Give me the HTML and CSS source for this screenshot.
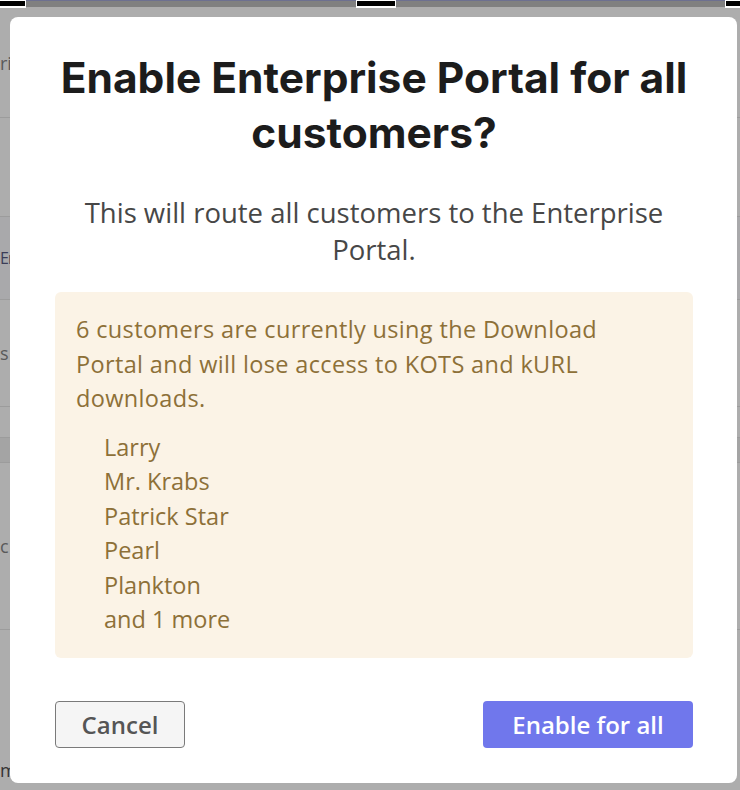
FILE: index.html
```html
<!DOCTYPE html>
<html lang="en">
<head>
<meta charset="utf-8">
<title>Enable Enterprise Portal</title>
<link rel="stylesheet" href="styles.css">
</head>
<body>
<div class="page">
  <div class="topbar">
    <div class="tb-box tb-box-first"><span class="tb-black"></span></div>
    <div class="tb-bar"></div>
    <div class="tb-box tb-box-mid"><span class="tb-black"></span></div>
    <div class="tb-bar"></div>
    <div class="tb-box tb-box-last"><span class="tb-black"></span></div>
  </div>
  <div class="rows">
    <div class="row row-1"><span class="frag">ri</span></div>
    <div class="row row-2"></div>
    <div class="row row-3"><span class="frag frag-link">Er</span></div>
    <div class="row row-4"><span class="frag">s</span></div>
    <div class="row row-5"></div>
    <div class="row row-6"></div>
    <div class="row row-7"><span class="frag">c</span></div>
    <div class="row row-8"><span class="frag frag-dark">m</span></div>
  </div>
</div>

<div class="modal" role="dialog" aria-modal="true">
  <h1 class="modal-title">Enable Enterprise Portal for all customers?</h1>
  <p class="modal-sub">This will route all customers to the Enterprise Portal.</p>
  <div class="warning">
    <p class="warning-text">6 customers are currently using the Download Portal and will lose access to KOTS and kURL downloads.</p>
    <ul class="warning-list">
      <li>Larry</li>
      <li>Mr. Krabs</li>
      <li>Patrick Star</li>
      <li>Pearl</li>
      <li>Plankton</li>
      <li>and 1 more</li>
    </ul>
  </div>
  <div class="actions">
    <button class="btn btn-cancel">Cancel</button>
    <button class="btn btn-primary">Enable for all</button>
  </div>
</div>
</body>
</html>
```

FILE: styles.css
```css
* { box-sizing: border-box; }

html, body {
  margin: 0;
  padding: 0;
  height: 100%;
  overflow: hidden;
}

body {
  background: #adadad;
  font-family: "Open Sans", "Liberation Sans", sans-serif;
}

.page {
  display: flex;
  flex-direction: column;
}

.topbar {
  display: flex;
  height: 8px;
}

.tb-box {
  background: #ffffff;
  padding: 1px 1px 2px 0;
  display: flex;
}
.tb-box-first { width: 26px; }
.tb-box-mid { width: 40px; padding-left: 1px; }
.tb-box-last { width: 15px; padding-left: 1px; padding-right: 0; }

.tb-black {
  flex: 1;
  background: #000000;
}

.tb-bar {
  flex: 1;
  background: #808080;
  border-top: 1px solid #6d7090;
  height: 7px;
}

.rows {
  display: flex;
  flex-direction: column;
}

.row {
  display: flex;
  align-items: center;
  border-bottom: 1px solid #9c9c9c;
  color: #5a5a5a;
  font-size: 18px;
}

.frag { white-space: nowrap; }
.frag-link { color: #3b3d58; font-size: 16px; letter-spacing: -1px; }
.frag-dark { color: #333333; }

.row-1 { height: 110px; }
.row-2 { height: 99px; }
.row-3 { height: 83px; background: #a9a9ab; }
.row-4 { height: 107px; }
.row-5 { height: 31px; }
.row-6 { height: 25px; background: #a4a4a4; }
.row-7 { height: 167px; }
.row-8 { height: 160px; align-items: flex-end; padding-bottom: 8px; border-bottom: 0; }

.modal {
  position: fixed;
  left: 10px;
  top: 17px;
  width: 727px;
  height: 766px;
  background: #ffffff;
  border-radius: 8px;
  padding: 33px 44px 35px 45px;
  display: flex;
  flex-direction: column;
}

.modal-title {
  margin: 0;
  font-family: "Inter", "DejaVu Sans", sans-serif;
  font-weight: 700;
  font-size: 42.5px;
  line-height: 55px;
  color: #1c1c1c;
  text-align: center;
}

.modal-sub {
  margin: 34px 0 0;
  font-size: 27.5px;
  line-height: 37px;
  color: #474747;
  text-align: center;
  padding: 0 10px;
}

.warning {
  margin-top: 24px;
  background: #fbf3e6;
  border-radius: 6px;
  padding: 20px 21px 21px;
  color: #8d7038;
  font-size: 23.5px;
  line-height: 34.5px;
}

.warning-text {
  margin: 0;
  padding-right: 40px;
  letter-spacing: 0.35px;
}

.warning-list {
  list-style: none;
  margin: 14px 0 0;
  padding: 0 0 0 28px;
}

.actions {
  margin-top: auto;
  display: flex;
  justify-content: space-between;
  align-items: center;
}

.btn {
  height: 47px;
  font-family: "Open Sans", "Liberation Sans", sans-serif;
  font-weight: 600;
  font-size: 24px;
  border-radius: 4px;
  cursor: pointer;
  padding: 0;
}

.btn-cancel {
  width: 130px;
  background: #f5f5f5;
  border: 1px solid #7a7a7a;
  color: #555555;
}

.btn-primary {
  width: 210px;
  background: #7077ec;
  border: 0;
  color: #ffffff;
}
```
